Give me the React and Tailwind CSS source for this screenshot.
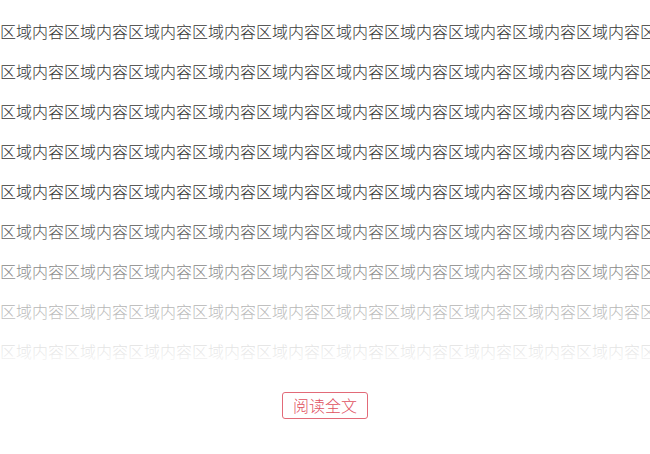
import React from "react";

const line = "区域内容".repeat(12);

export default function App() {
  return (
    <div
      className="w-[650px] h-[454px] bg-white overflow-hidden"
      style={{ fontFamily: '"Noto Sans CJK SC", "Noto Sans", sans-serif' }}
    >
      <div className="relative pt-[11px] overflow-hidden">
        {Array.from({ length: 9 }).map((_, i) => (
          <p key={i} className="whitespace-nowrap text-[16px] leading-[40px] font-light text-[#333]">
            {line}
          </p>
        ))}
        <div className="absolute left-0 right-0 bottom-0 h-[172px] bg-gradient-to-b from-white/0 to-white" />
      </div>
      <div className="flex justify-center pt-[21px]">
        <button className="h-[27px] w-[86px] border border-[#e26a78] rounded-[3px] text-[#e0505f] text-[16px] leading-[25px] font-light">
          阅读全文
        </button>
      </div>
    </div>
  );
}
